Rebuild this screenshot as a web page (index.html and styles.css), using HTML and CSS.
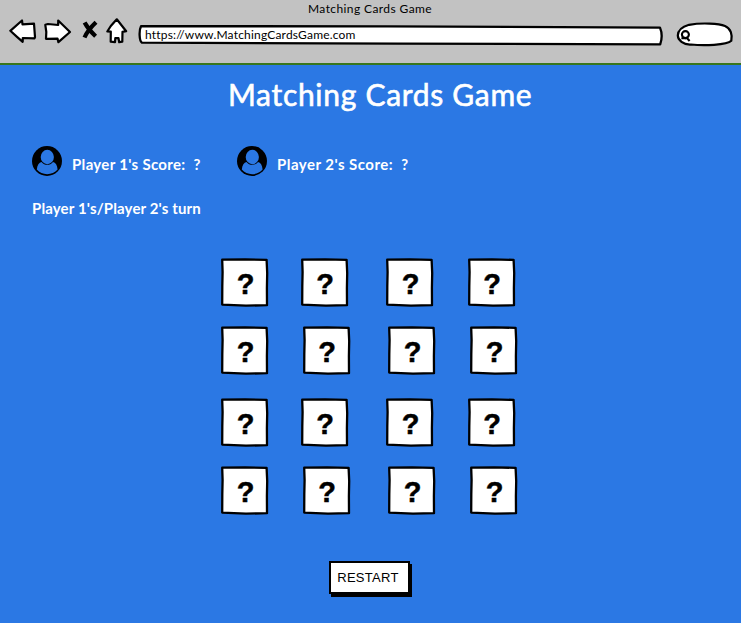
FILE: index.html
```html
<!DOCTYPE html>
<html lang="en">
<head>
<meta charset="utf-8">
<title>Matching Cards Game</title>
<link rel="stylesheet" href="styles.css">
</head>
<body>
<svg class="defs" width="0" height="0">
  <symbol id="card" viewBox="0 0 48 50">
    <path d="M1.2 1.7 L24 1.3 L45.6 1.9 L46.2 15 L45.9 30 L46 47.2 L25 47.7 L1.2 46.6 L1.3 28 L1.6 14Z" fill="#fff" stroke="#000" stroke-width="2.3" stroke-linejoin="round"/>
  </symbol>
  <symbol id="user" viewBox="0 0 30 30">
    <circle cx="15" cy="15" r="15"/>
    <ellipse cx="15.3" cy="11" rx="6.6" ry="7.2" fill="#2b78e4"/>
    <path d="M4.8 23.5C5.2 19 7 16.5 9.5 16C12.5 19.8 18 19.8 21 16C23.6 16.6 25.2 19.2 25.6 23.5C20.5 29.7 9.8 29.7 4.8 23.5Z" fill="#2b78e4"/>
  </symbol>
</svg>
<header class="browser">
  <div class="window-title"><span>Matching Cards Game</span></div>
  <div class="toolbar">
    <svg class="nav" width="132" height="32" viewBox="0 0 132 32" fill="#fff" stroke="#000" stroke-width="2.2" stroke-linejoin="round" stroke-linecap="round">
      <path d="M10.3 14.8L22 4.5L22.5 8.4L34 7.6L35 21L34.5 22.3L22.8 22L22.7 25.8L17 20.8Z"/>
      <path d="M45.3 8.8L48 8L58.2 9V4.5L70 16L58.4 26.2L57.5 22.6L46 22.8L46.3 16Z"/>
      <path d="M84.6 6.5C87 11 91 16 95.6 20.3M96 6.3C91 11 87 16 84.5 21.5" stroke-width="4.2" stroke-linecap="butt"/>
      <path d="M116.8 3.3L126.2 15.2L122.5 15.8L122.3 25.7L119.2 26.2L118.5 22.2L115.3 22L115 26.2L110.7 25.7L110.8 15.7L107.3 15.5L110.8 10Z"/>
    </svg>
    <div class="address">
      <svg width="526" height="24" viewBox="0 0 526 24"><path d="M3 2.2L250 2.3L522 3.6C524.3 9 524 15 522.2 20.4L260 19.6L4 18.7C1 17 1 6 3 2.2Z" fill="#fff" stroke="#000" stroke-width="2.3" stroke-linejoin="round"/></svg>
      <span class="url">https://www.MatchingCardsGame.com</span>
    </div>
    <svg class="search" width="60" height="28" viewBox="0 0 60 28" fill="none" stroke="#000" stroke-width="2.2">
      <path d="M14 3.8C27 1.5 44 2.5 50 5C56 7.5 57.5 14 56.3 19.8C52 24.3 28 24.8 16 23.5C8 24 3 19 2.8 14.5C3 9 8 5.5 14 3.8Z" fill="#fff"/>
      <circle cx="10.4" cy="13.6" r="3.5" stroke-width="2.1"/>
      <path d="M6.4 17.2H12.2L14.6 20" stroke-width="2.1"/>
    </svg>
  </div>
</header>
<main>
  <h1><span>Matching Cards Game</span></h1>
  <section class="players">
    <div class="player"><svg width="30" height="30"><use href="#user"/></svg><span class="score">Player 1's Score:&nbsp; ?</span></div>
    <div class="player"><svg width="30" height="30"><use href="#user"/></svg><span class="score second">Player 2's Score:&nbsp; ?</span></div>
  </section>
  <p class="turn">Player 1's/Player 2's turn</p>
  <section class="board">
    <div class="row">
      <div class="card"><svg><use href="#card"/></svg><span>?</span></div>
      <div class="card"><svg><use href="#card"/></svg><span>?</span></div>
      <div class="card"><svg><use href="#card"/></svg><span>?</span></div>
      <div class="card"><svg><use href="#card"/></svg><span>?</span></div>
    </div>
    <div class="row offset">
      <div class="card"><svg><use href="#card"/></svg><span>?</span></div>
      <div class="card"><svg><use href="#card"/></svg><span>?</span></div>
      <div class="card"><svg><use href="#card"/></svg><span>?</span></div>
      <div class="card"><svg><use href="#card"/></svg><span>?</span></div>
    </div>
    <div class="row">
      <div class="card"><svg><use href="#card"/></svg><span>?</span></div>
      <div class="card"><svg><use href="#card"/></svg><span>?</span></div>
      <div class="card"><svg><use href="#card"/></svg><span>?</span></div>
      <div class="card"><svg><use href="#card"/></svg><span>?</span></div>
    </div>
    <div class="row offset">
      <div class="card"><svg><use href="#card"/></svg><span>?</span></div>
      <div class="card"><svg><use href="#card"/></svg><span>?</span></div>
      <div class="card"><svg><use href="#card"/></svg><span>?</span></div>
      <div class="card"><svg><use href="#card"/></svg><span>?</span></div>
    </div>
  </section>
  <button class="restart" type="button">RESTART</button>
</main>
</body>
</html>
```
FILE: styles.css
```css
* { box-sizing: border-box; }
body {
  margin: 0;
  height: 623px;
  overflow: hidden;
  background: #2b78e4;
  color: #fff;
  font-family: Lato, "Liberation Sans", sans-serif;
}
svg { display: block; flex: none; }
.defs { position: absolute; }
.browser {
  height: 65px;
  background: #c2c2c2;
  border-bottom: 2px solid #38761d;
  color: #000;
}
.window-title {
  height: 16px;
  padding-left: 308px;
  font-size: 12px;
  line-height: 17px;
  letter-spacing: 0.4px;
  white-space: nowrap;
}
.toolbar { display: flex; }
.nav { margin-right: 6px; }
.address {
  display: grid;
  width: 526px;
  height: 24px;
  margin-top: 8px;
}
.address > * { grid-area: 1 / 1; }
.url {
  padding-left: 7px;
  font-size: 12px;
  line-height: 21px;
  letter-spacing: 0.19px;
}
.search { margin: 5px 0 0 11px; }
h1 {
  margin: 0;
  height: 81px;
  padding-left: 228px;
  font-size: 30px;
  font-weight: 400;
  line-height: 58px;
  letter-spacing: 0.7px;
  white-space: nowrap;
  -webkit-text-stroke: 0.6px #fff;
}
.players { display: flex; padding-left: 32px; height: 30px; }
.player { display: flex; width: 205px; gap: 10px; }
.player svg { fill: #000; }
.score, .turn {
  font-size: 15px;
  font-weight: 700;
  line-height: 20px;
  white-space: nowrap;
}
.score { padding-top: 8px; letter-spacing: 0.32px; }
.score.second { letter-spacing: 0.47px; }
.turn { margin: 22px 0 0 32px; letter-spacing: 0.14px; }
.board { display: flex; flex-direction: column; margin: 40px 0 0 221px; }
.row {
  display: grid;
  grid-template-columns: 79.5px 85.5px 81.5px 48px;
  height: 68px;
}
.row.offset { grid-template-columns: 81.5px 85.5px 82px 48px; height: 72px; }
.card { display: grid; width: 48px; height: 50px; }
.card > * { grid-area: 1 / 1; }
.card svg { width: 48px; height: 50px; }
.card span {
  padding-left: 1px;
  color: #000;
  font-family: "Liberation Sans", sans-serif;
  font-size: 29px;
  font-weight: 700;
  line-height: 52px;
  text-align: center;
  -webkit-text-stroke: 0.5px #000;
}
.restart {
  display: block;
  width: 81px;
  height: 33px;
  margin: 23px 0 0 329px;
  padding: 0 3px 0 0;
  border: 2px solid #000;
  background: #fff;
  box-shadow: 2px 3px 0 #000;
  color: #000;
  font: 13px/29px "Liberation Sans", sans-serif;
  letter-spacing: 0.3px;
}
```
